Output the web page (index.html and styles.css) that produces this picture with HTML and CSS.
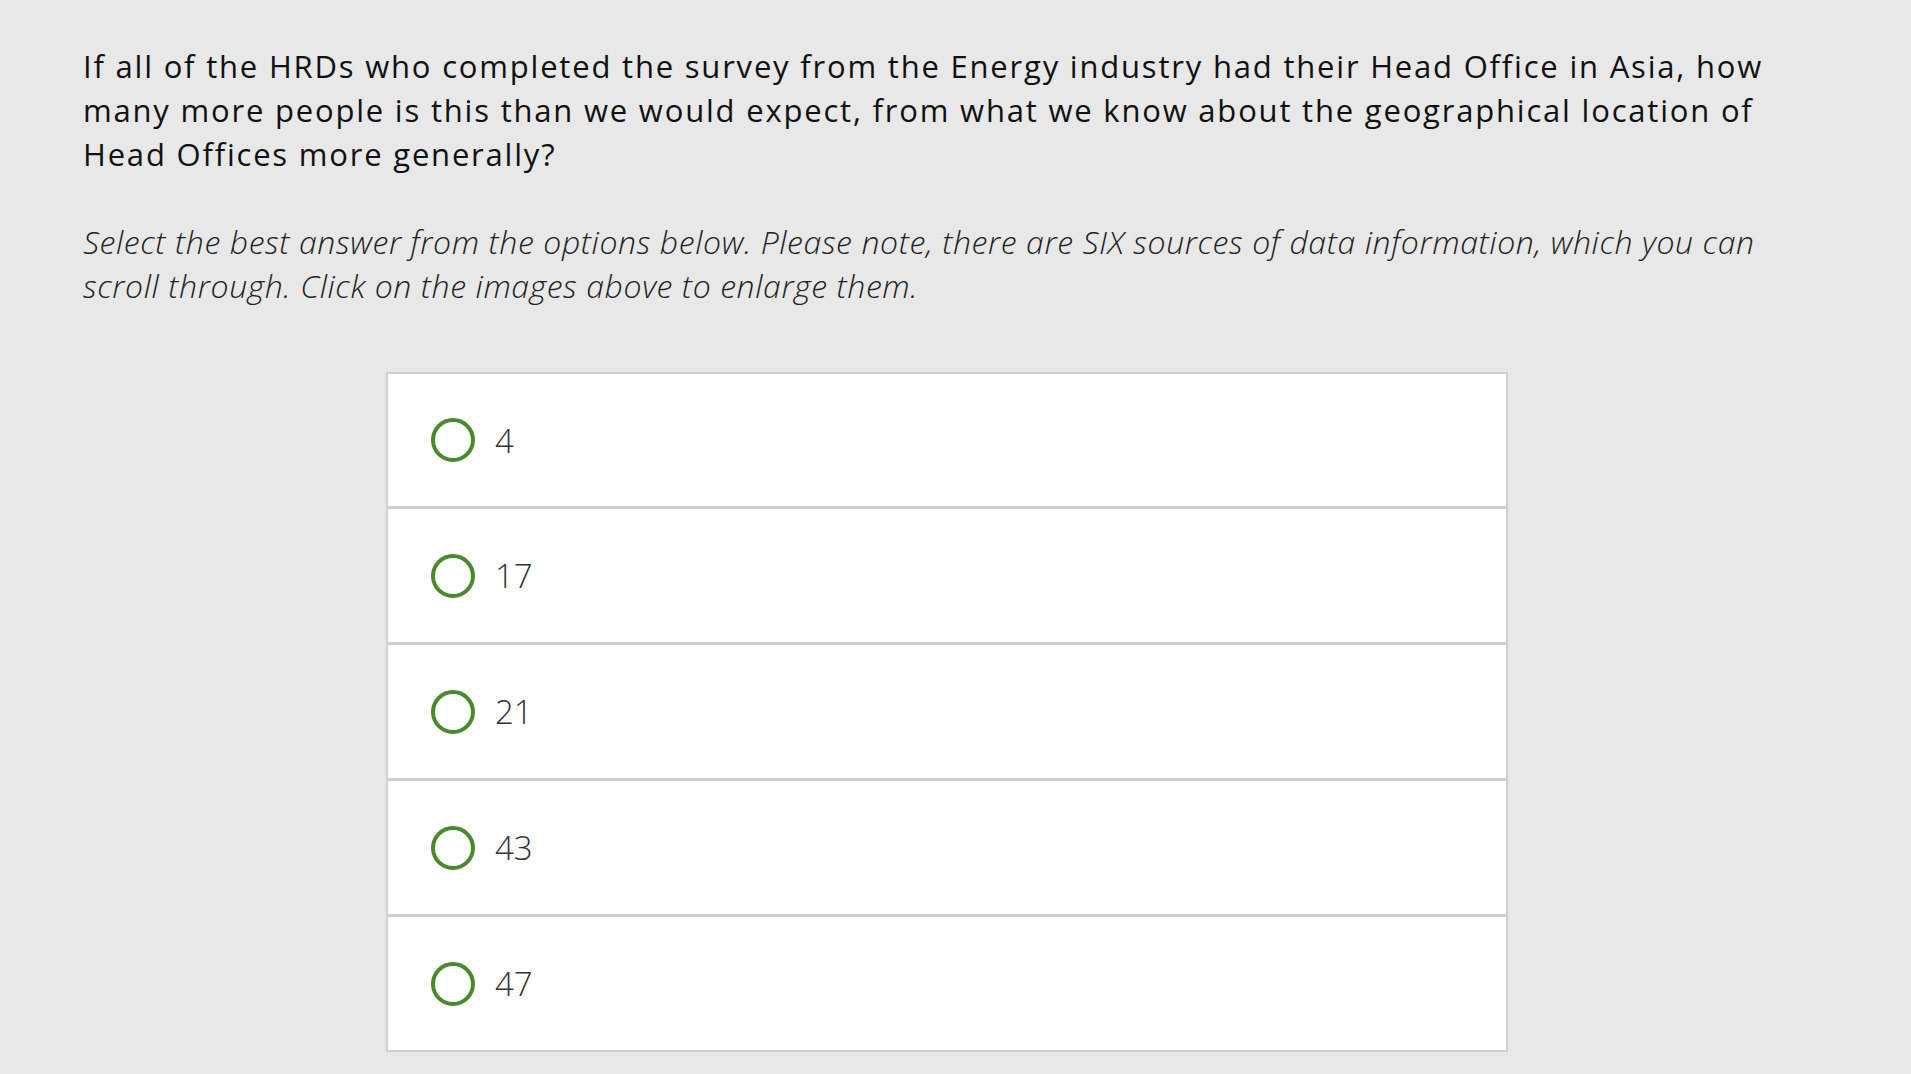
FILE: index.html
```html
<!DOCTYPE html>
<html lang="en">
<head>
<meta charset="utf-8">
<link rel="stylesheet" href="styles.css">
</head>
<body>
<main class="page">
  <p class="question">If all of the HRDs who completed the survey from the Energy industry had their Head Office in Asia, how many more people is this than we would expect, from what we know about the geographical location of Head Offices more generally?</p>
  <p class="instruction">Select the best answer from the options below. Please note, there are SIX sources of data information, which you can scroll through. Click on the images above to enlarge them.</p>
  <ul class="options">
    <li class="option"><span class="radio"></span><span class="label">4</span></li>
    <li class="option"><span class="radio"></span><span class="label">17</span></li>
    <li class="option"><span class="radio"></span><span class="label">21</span></li>
    <li class="option"><span class="radio"></span><span class="label">43</span></li>
    <li class="option"><span class="radio"></span><span class="label">47</span></li>
  </ul>
</main>
</body>
</html>
```

FILE: styles.css
```css
html, body {
  margin: 0;
  padding: 0;
  background: #e7e8e7;
}
body {
  font-family: "Open Sans", "Liberation Sans", sans-serif;
  color: #111;
}
.page {
  padding: 44px 83px 0 83px;
}
.question {
  margin: 0;
  width: 1720px;
  font-size: 31px;
  line-height: 44px;
  letter-spacing: 1.8px;
  color: #111;
}
.instruction {
  margin: 44px 0 0 0;
  width: 1720px;
  font-size: 32px;
  line-height: 44px;
  letter-spacing: 0.6px;
  font-style: italic;
  font-weight: 300;
  color: #222;
}
.options {
  list-style: none;
  margin: 64px 0 0 303px;
  padding: 0;
  width: 1122px;
}
.option {
  box-sizing: border-box;
  height: 136px;
  background: #fff;
  border: 2px solid #cfcfcf;
  border-top-width: 1px;
  border-bottom-width: 2px;
  display: flex;
  align-items: center;
  gap: 20px;
  padding-left: 43px;
}
.option:first-child {
  border-top-width: 2px;
}
.radio {
  box-sizing: border-box;
  width: 44px;
  height: 44px;
  border: 4px solid #4a8a2c;
  border-radius: 50%;
}
.label {
  font-size: 33px;
  font-weight: 300;
  color: #333;
}
```
